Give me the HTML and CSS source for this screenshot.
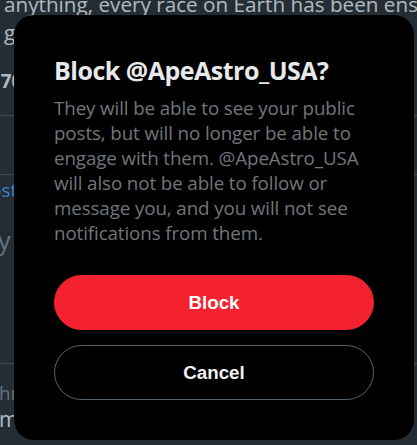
FILE: index.html
```html
<!DOCTYPE html>
<html lang="en">
<head>
<meta charset="utf-8">
<title>Block @ApeAstro_USA?</title>
<link rel="stylesheet" href="styles.css">
</head>
<body>
<div class="page">
  <div class="tweet-text">
    <p class="line">anything, every race on Earth has been enslaved at some point in history</p>
    <p class="line">g</p>
  </div>
  <div class="stats"><span class="num">170</span> Views</div>
  <div class="sep sep-first"></div>
  <div class="actions-row"></div>
  <div class="sep"></div>
  <div class="reply-row"><span class="post">Post</span></div>
  <div class="reply-box"><span class="ph">y</span></div>
  <div class="sep sep-third"></div>
  <div class="next"><span class="thr">hr</span></div>
  <div class="next2"><span class="mm">m</span></div>
</div>

<div class="overlay"></div>

<div class="dialog" role="dialog" aria-labelledby="dlg-title">
  <h1 id="dlg-title" class="dialog-title">Block @ApeAstro_USA?</h1>
  <p class="dialog-text">They will be able to see your public posts, but will no longer be able to engage with them. @ApeAstro_USA will also not be able to follow or message you, and you will not see notifications from them.</p>
  <div class="actions">
    <button class="btn btn-danger" type="button">Block</button>
    <button class="btn btn-outline" type="button">Cancel</button>
  </div>
</div>
</body>
</html>
```
FILE: styles.css
```css
* { box-sizing: border-box; }
html, body { margin: 0; padding: 0; }
body {
  width: 417px;
  height: 445px;
  overflow: hidden;
  background: #000;
  font-family: "Open Sans", "Noto Sans", sans-serif;
  position: relative;
}

.page {
  width: 417px;
  height: 445px;
  overflow: hidden;
  color: #e7e9ea;
  white-space: nowrap;
}
.tweet-text {
  margin-top: -10px;
  padding-left: 4px;
  font-size: 20.7px;
  line-height: 28px;
}
.line { margin: 0; }
.stats {
  margin-top: 22px;
  margin-left: -10px;
  font-size: 18.75px;
  line-height: 25px;
  color: #71767b;
}
.num { color: #e7e9ea; font-weight: 700; }
.sep {
  height: 1px;
  background: #2f3336;
}
.sep-first { margin-top: 22px; }
.actions-row { height: 58px; }
.reply-row {
  padding-top: 2px;
  margin-left: -21px;
  font-size: 18.75px;
  line-height: 25px;
  color: #1d9bf0;
}
.reply-box {
  margin-top: 23px;
  margin-left: -2px;
  font-size: 25px;
  line-height: 30px;
  color: #71767b;
}
.sep-third { margin-top: 108px; }
.next {
  margin-top: 16px;
  margin-left: -1px;
  font-size: 18.75px;
  line-height: 25px;
  color: #71767b;
}
.next2 {
  margin-left: -1px;
  font-size: 21px;
  line-height: 28px;
  color: #e7e9ea;
}

.overlay {
  position: absolute;
  inset: 0;
  background: rgba(91, 112, 131, 0.4);
}

.dialog {
  position: absolute;
  left: 14px;
  top: 15px;
  width: 400px;
  padding: 40px;
  background: #000;
  border-radius: 20px;
  display: flex;
  flex-direction: column;
}
.dialog-title {
  margin: 0;
  font-size: 25px;
  line-height: 30px;
  font-weight: 700;
  color: #e7e9ea;
  letter-spacing: -0.5px;
}
.dialog-text {
  margin: 10px 0 0;
  font-size: 18.75px;
  line-height: 25px;
  color: #71767b;
  letter-spacing: -0.1px;
}
.actions {
  margin-top: 30px;
  display: flex;
  flex-direction: column;
  gap: 15px;
}
.btn {
  height: 55px;
  border-radius: 9999px;
  font-family: "Liberation Sans", Arial, sans-serif;
  font-size: 18.75px;
  font-weight: 700;
  padding: 0 20px;
  cursor: pointer;
}
.btn-danger {
  background: #f4212e;
  color: #fff;
  border: 1px solid #f4212e;
}
.btn-outline {
  background: transparent;
  color: #eff3f4;
  border: 1px solid #536471;
}
```
